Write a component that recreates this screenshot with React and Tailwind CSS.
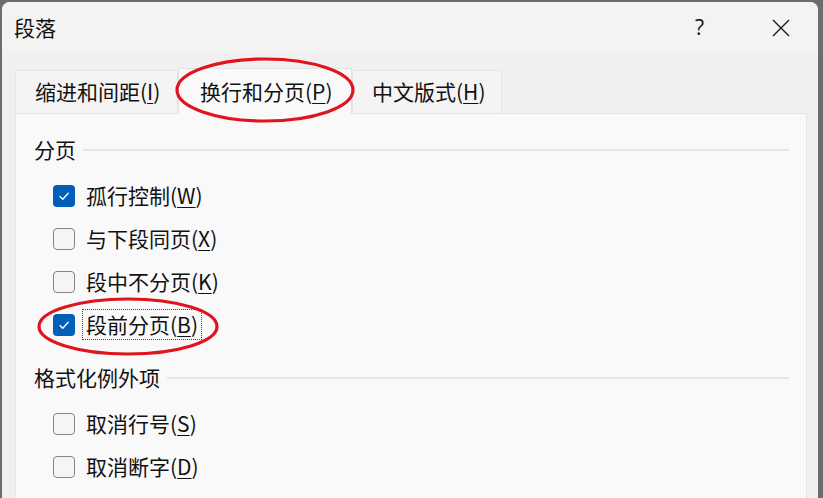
import React from "react";

const font = { fontFamily: '"Noto Sans CJK SC", "Noto Sans", sans-serif' };

function Key({ children }) {
  return <span className="underline underline-offset-[3px] decoration-[1px]">{children}</span>;
}

function Checkbox({ checked }) {
  if (checked) {
    return (
      <div className="w-[22px] h-[22px] rounded-[4px] bg-[#005fb8] flex items-center justify-center shrink-0">
        <svg width="22" height="22" viewBox="0 0 22 22" fill="none">
          <path d="M7 11.5 L9.8 14.3 L15.2 8.2" stroke="white" strokeWidth="1.3" strokeLinecap="round" strokeLinejoin="round" />
        </svg>
      </div>
    );
  }
  return <div className="w-[22px] h-[22px] rounded-[4px] bg-[#f5f5f5] border border-[#858585] shrink-0" />;
}

function Row({ checked, label, hotkey, focused }) {
  return (
    <div className="h-[43px] flex items-center pl-[19px]">
      <Checkbox checked={checked} />
      <div
        className={`ml-[7px] h-[31px] px-[3px] flex items-center text-[21px] text-[#111] ${
          focused ? "border border-dotted border-[#444]" : "border border-transparent"
        }`}
      >
        {label}(<Key>{hotkey}</Key>)
      </div>
    </div>
  );
}

function Section({ title, className, children }) {
  return (
    <div className={className}>
      <div className="h-[30px] flex items-center gap-[7px]">
        <span className="text-[21px] text-[#111]">{title}</span>
        <div className="flex-1 h-[2px] bg-[#e4e4e4]" />
      </div>
      <div className="mt-[9px]">{children}</div>
    </div>
  );
}

export default function App() {
  const tabs = [
    { label: "缩进和间距", key: "I", active: false, w: "w-[163px]" },
    { label: "换行和分页", key: "P", active: true, w: "w-[174px]" },
    { label: "中文版式", key: "H", active: false, w: "w-[150px]" },
  ];

  return (
    <div className="w-[823px] h-[498px] overflow-hidden bg-[#6d6d6d] pt-[2px] pl-[2px] pr-[5px]" style={font}>
      <div className="relative h-full bg-[#f0f0f0] rounded-t-[8px] overflow-hidden">
        {/* Title bar */}
        <div className="h-[52px] bg-[#f3f3f3] flex items-center pl-[12px] pr-[28px]">
          <span className="text-[21px] text-[#111]">段落</span>
          <div className="flex-1" />
          <span className="text-[21px] text-[#111] mr-[68px]" style={{ fontFamily: '"Open Sans", sans-serif' }}>?</span>
          <svg width="18" height="18" viewBox="0 0 18 18">
            <path d="M1 1 L17 17 M17 1 L1 17" stroke="#1a1a1a" strokeWidth="1.4" />
          </svg>
        </div>

        {/* Tabs */}
        <div className="flex items-end pl-[13px] pt-[14px]">
          {tabs.map((t) =>
            t.active ? (
              <div
                key={t.label}
                className={`${t.w} h-[46px] -mb-[1px] relative z-10 bg-[#f9f9f9] border border-b-0 border-[#e3e3e3] flex items-center pl-[21px] text-[21px] text-[#111]`}
              >
                {t.label}(<Key>{t.key}</Key>)
              </div>
            ) : (
              <div
                key={t.label}
                className={`${t.w} h-[43px] bg-[#f4f4f4] border border-b-0 border-[#e6e6e6] flex items-center pl-[19px] text-[21px] text-[#111]`}
              >
                {t.label}(<Key>{t.key}</Key>)
              </div>
            )
          )}
        </div>

        {/* Panel */}
        <div className="mx-[13px] w-[792px] h-[400px] bg-[#f9f9f9] border border-[#e5e5e5] pt-[21px] pl-[18px] pr-[17px]">
          <Section title="分页">
            <Row checked label="孤行控制" hotkey="W" />
            <Row label="与下段同页" hotkey="X" />
            <Row label="段中不分页" hotkey="K" />
            <Row checked label="段前分页" hotkey="B" focused />
          </Section>
          <Section title="格式化例外项" className="mt-[17px]">
            <Row label="取消行号" hotkey="S" />
            <Row label="取消断字" hotkey="D" />
          </Section>
        </div>

        {/* Annotation ellipses */}
        <svg className="absolute left-0 top-0 z-20 pointer-events-none" width="816" height="496" viewBox="2 2 816 496">
          <ellipse cx="265" cy="90" rx="88" ry="31" fill="none" stroke="#e0141e" strokeWidth="3.2" />
          <ellipse cx="128" cy="326.5" rx="89" ry="27.5" fill="none" stroke="#e0141e" strokeWidth="3.2" />
        </svg>
      </div>
    </div>
  );
}
